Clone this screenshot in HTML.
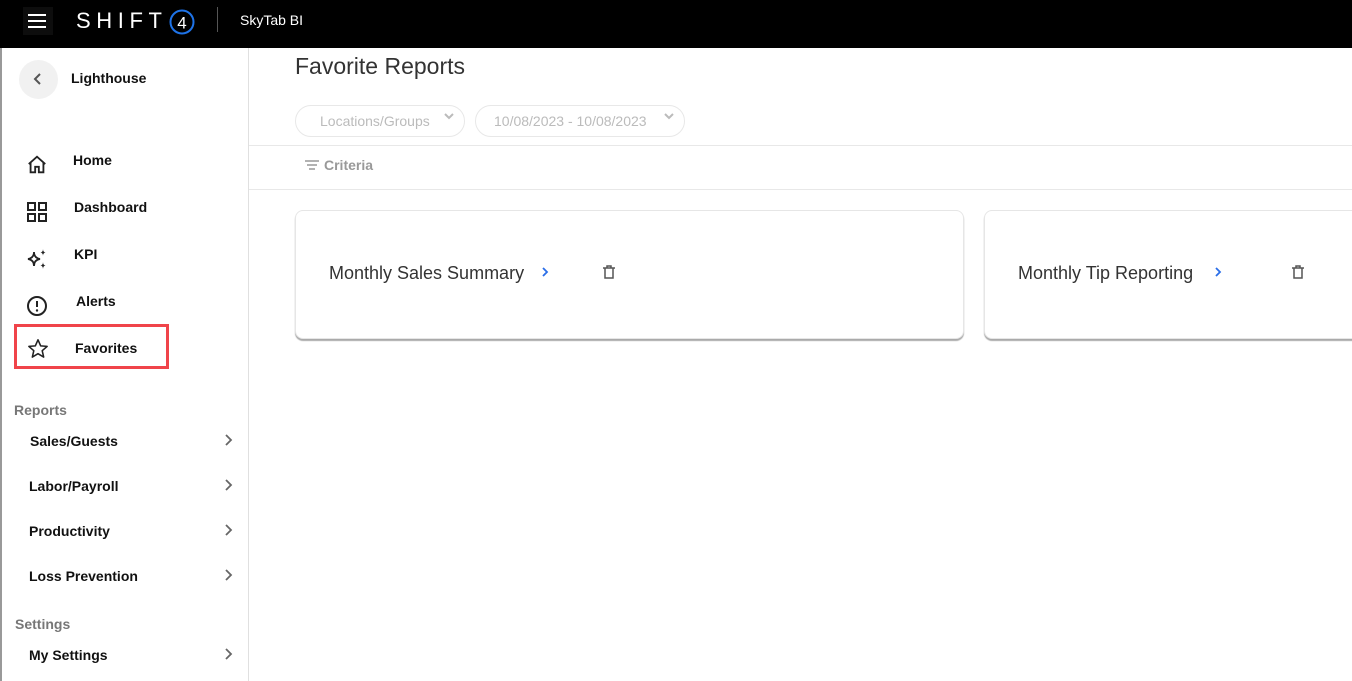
<!DOCTYPE html>
<html><head><meta charset="utf-8"><style>
*{margin:0;padding:0;box-sizing:border-box}
body{width:1352px;height:681px;overflow:hidden;background:#fff;font-family:"Liberation Sans",sans-serif;position:relative}
.a{position:absolute}
.top{left:0;top:0;width:1352px;height:48px;background:#000}
.nav{font-weight:bold;font-size:14px;color:#111}
.sec{font-weight:bold;font-size:14px;color:#777}
.chev{position:absolute;left:224px}
.card{background:#fff;border:1px solid #e6e6e6;border-radius:8px;box-shadow:0 2px 1px #aaa;height:129px;top:210px}
.ct{font-size:18px;color:#333}
.pill{border:1px solid #e8e8e8;border-radius:16px;height:32px;top:105px;color:#bbb;font-size:14px;line-height:30px}
</style></head><body>
<div class="a top"></div>
<div class="a" style="left:23px;top:7px;width:30px;height:28px;background:#0d0d0d"></div>
<svg class="a" style="left:27px;top:12px" width="20" height="18"><path d="M1 3h18M1 9h18M1 15h18" stroke="#fff" stroke-width="2"/></svg>
<div class="a" style="left:76px;top:8px;color:#fff;font-size:22px;line-height:26px;letter-spacing:5.6px;white-space:nowrap">SHIFT</div>
<svg class="a" style="left:169px;top:9px" width="26" height="26"><circle cx="13" cy="13" r="11.5" fill="none" stroke="#1e73e8" stroke-width="2"/><text x="13" y="19.5" font-size="17" fill="#fff" text-anchor="middle" font-family="Liberation Sans">4</text></svg>
<div class="a" style="left:217px;top:7px;width:1px;height:25px;background:#555"></div>
<div class="a" style="left:240px;top:12px;color:#fff;font-size:14px">SkyTab BI</div>

<div class="a" style="left:0;top:48px;width:2px;height:633px;background:#999"></div>
<div class="a" style="left:248px;top:48px;width:1px;height:633px;background:#e0e0e0"></div>
<div class="a" style="left:19px;top:60px;width:39px;height:39px;border-radius:50%;background:#f1f1f1"></div>
<svg class="a" style="left:33px;top:72px" width="10" height="14"><path d="M7 2L2 7l5 5" fill="none" stroke="#555" stroke-width="2"/></svg>
<div class="a nav" style="left:71px;top:70px">Lighthouse</div>

<svg class="a" style="left:26px;top:154px" width="22" height="22" viewBox="0 0 24 24"><path d="M3 11L12 3l9 8M5 9v11h5v-6h4v6h5V9" fill="none" stroke="#222" stroke-width="2"/></svg>
<div class="a nav" style="left:73px;top:152px">Home</div>
<svg class="a" style="left:27px;top:202px" width="20" height="20"><g fill="none" stroke="#222" stroke-width="2"><rect x="1" y="1" width="7" height="7"/><rect x="12" y="1" width="7" height="7"/><rect x="1" y="12" width="7" height="7"/><rect x="12" y="12" width="7" height="7"/></g></svg>
<div class="a nav" style="left:74px;top:199px">Dashboard</div>
<svg class="a" style="left:26px;top:248px" width="22" height="22" viewBox="0 0 22 22"><g fill="none" stroke="#222" stroke-width="1.8"><path d="M8 4Q8 10 2 11Q8 12 8 18Q8 12 14 11Q8 10 8 4z"/></g><path d="M17 1Q17 4 14.5 4.5Q17 5 17 8Q17 5 19.5 4.5Q17 4 17 1z M17 14Q17 17 14.5 17.5Q17 18 17 21Q17 18 19.5 17.5Q17 17 17 14z" fill="#222"/></svg>
<div class="a nav" style="left:74px;top:246px">KPI</div>
<svg class="a" style="left:26px;top:295px" width="22" height="22"><circle cx="11" cy="11" r="9" fill="none" stroke="#222" stroke-width="2"/><path d="M11 6v6" stroke="#222" stroke-width="2"/><circle cx="11" cy="15.5" r="1.2" fill="#222"/></svg>
<div class="a nav" style="left:76px;top:293px">Alerts</div>
<div class="a" style="left:14px;top:324px;width:155px;height:45px;border:3px solid #f0444a"></div>
<svg class="a" style="left:27px;top:338px" width="22" height="21" viewBox="0 0 24 23"><path d="M12 2l2.9 6.6 7.1.6-5.4 4.7 1.6 7L12 17.2 5.8 20.9l1.6-7L2 9.2l7.1-.6z" fill="none" stroke="#222" stroke-width="1.7" stroke-linejoin="round"/></svg>
<div class="a nav" style="left:75px;top:340px">Favorites</div>

<div class="a sec" style="left:14px;top:402px">Reports</div>
<div class="a nav" style="left:30px;top:433px">Sales/Guests</div>
<div class="a nav" style="left:29px;top:478px">Labor/Payroll</div>
<div class="a nav" style="left:29px;top:523px">Productivity</div>
<div class="a nav" style="left:29px;top:568px">Loss Prevention</div>
<div class="a sec" style="left:15px;top:616px">Settings</div>
<div class="a nav" style="left:29px;top:647px">My Settings</div>
<svg class="chev" style="top:433px" width="10" height="14"><path d="M2 2l5 5-5 5" fill="none" stroke="#666" stroke-width="1.8"/></svg>
<svg class="chev" style="top:478px" width="10" height="14"><path d="M2 2l5 5-5 5" fill="none" stroke="#666" stroke-width="1.8"/></svg>
<svg class="chev" style="top:523px" width="10" height="14"><path d="M2 2l5 5-5 5" fill="none" stroke="#666" stroke-width="1.8"/></svg>
<svg class="chev" style="top:568px" width="10" height="14"><path d="M2 2l5 5-5 5" fill="none" stroke="#666" stroke-width="1.8"/></svg>
<svg class="chev" style="top:647px" width="10" height="14"><path d="M2 2l5 5-5 5" fill="none" stroke="#666" stroke-width="1.8"/></svg>

<div class="a" style="left:295px;top:53px;font-size:23px;color:#333">Favorite Reports</div>
<div class="a pill" style="left:295px;width:170px;padding-left:24px">Locations/Groups</div>
<svg class="a" style="left:443px;top:112px" width="12" height="10"><path d="M2 2l4 4 4-4" fill="none" stroke="#bbb" stroke-width="2"/></svg>
<div class="a pill" style="left:475px;width:210px;padding-left:18px">10/08/2023 - 10/08/2023</div>
<svg class="a" style="left:663px;top:112px" width="12" height="10"><path d="M2 2l4 4 4-4" fill="none" stroke="#bbb" stroke-width="2"/></svg>
<div class="a" style="left:249px;top:145px;width:1103px;height:1px;background:#e8e8e8"></div>
<svg class="a" style="left:304px;top:159px" width="16" height="12"><path d="M1 2h14M3 6h10M5 10h6" stroke="#999" stroke-width="1.4"/></svg>
<div class="a" style="left:324px;top:157px;font-size:14px;font-weight:bold;color:#999">Criteria</div>
<div class="a" style="left:249px;top:189px;width:1103px;height:1px;background:#e8e8e8"></div>

<div class="a card" style="left:295px;width:669px"></div>
<div class="a ct" style="left:329px;top:263px">Monthly Sales Summary</div>
<svg class="a" style="left:541px;top:266px" width="8" height="12"><path d="M2 2l4 4-4 4" fill="none" stroke="#2a6ee8" stroke-width="1.8"/></svg>
<svg class="a" style="left:602px;top:265px" width="14" height="15"><path d="M1 3h12M5 3V1h4v2M3 3v10h8V3" fill="none" stroke="#555" stroke-width="1.5"/></svg>
<div class="a card" style="left:984px;width:400px"></div>
<div class="a ct" style="left:1018px;top:263px">Monthly Tip Reporting</div>
<svg class="a" style="left:1214px;top:266px" width="8" height="12"><path d="M2 2l4 4-4 4" fill="none" stroke="#2a6ee8" stroke-width="1.8"/></svg>
<svg class="a" style="left:1291px;top:265px" width="14" height="15"><path d="M1 3h12M5 3V1h4v2M3 3v10h8V3" fill="none" stroke="#555" stroke-width="1.5"/></svg>
</body></html>
